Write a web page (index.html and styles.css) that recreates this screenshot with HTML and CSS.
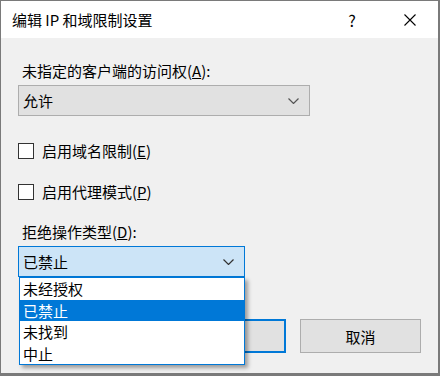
FILE: index.html
```html
<!DOCTYPE html>
<html lang="zh-CN">
  <head>
    <meta charset="utf-8" />
    <link rel="stylesheet" href="styles.css">
  </head>
  <body>
    <div class="dialog">
      <div class="titlebar">
        <span class="title">编辑 IP 和域限制设置</span>
        <span class="tb-btn help">?</span>
        <span class="tb-btn close">
          <svg width="12" height="12" viewBox="0 0 12 12"><path d="M0.5 0.5 L11.5 11.5 M11.5 0.5 L0.5 11.5" stroke="#000" stroke-width="1.1" fill="none"/></svg>
        </span>
      </div>
      <div class="content">
        <div class="label">未指定的客户端的访问权(<u>A</u>):</div>
        <div class="select">
          <span>允许</span>
          <svg class="chevron" width="11" height="6" viewBox="0 0 11 6"><polyline points="0.5,0.5 5.5,5.5 10.5,0.5" stroke="#555" stroke-width="1.2" fill="none"/></svg>
        </div>

        <div class="check first"><span class="box"></span>启用域名限制(<u>E</u>)</div>
        <div class="check"><span class="box"></span>启用代理模式(<u>P</u>)</div>

        <div class="label second">拒绝操作类型(<u>D</u>):</div>
        <div class="combo">
          <div class="select focused">
            <span>已禁止</span>
            <svg class="chevron" width="11" height="6" viewBox="0 0 11 6"><polyline points="0.5,0.5 5.5,5.5 10.5,0.5" stroke="#333" stroke-width="1.2" fill="none"/></svg>
          </div>
          <ul class="options">
            <li>未经授权</li>
            <li class="selected">已禁止</li>
            <li>未找到</li>
            <li>中止</li>
          </ul>
        </div>

        <div class="buttons">
          <button class="btn default">确定</button>
          <button class="btn">取消</button>
        </div>
      </div>
    </div>
  </body>
</html>
```

FILE: styles.css
```css
body {
    margin: 0;
    font-family: "Noto Sans CJK SC", "Noto Sans", sans-serif;
    font-size: 15px;
    color: #000;
}

.dialog {
    width: 440px; height: 376px;
    box-sizing: border-box;
    border: 1px solid #7a7a7a;
    border-right-width: 2px;
    border-bottom-width: 3px;
    background: #f0f0f0;
}

.titlebar {
    display: flex;
    align-items: center;
    height: 37px;
    background: #fff;
}

  .titlebar .title { flex: 1; padding-left: 11px; line-height: 20px; }
  .tb-btn {
      width: 57px; height: 37px;
      display: flex; align-items: center; justify-content: center;
  }
  .tb-btn.help { width: 58px; font-size: 16px; }

.content {
    padding: 23px 17px 0 17px;
}

.label {
    line-height: 20px;
    margin-left: 4px;
}
.label.second { margin-top: 20px; }

.select {
    display: flex;
    align-items: center;
    justify-content: space-between;
    box-sizing: border-box;
    width: 292px; height: 31px;
    margin-top: 4px;
    padding: 0 10px 0 4px;
    border: 1px solid #adadad;
    background: #e1e1e1;
    line-height: 20px;
}

  .select .chevron { margin-top: 1px; }

.check {
    display: flex;
    align-items: center;
    line-height: 20px;
    margin-top: 21px;
}
.check.first { margin-top: 25px; }

  .check .box {
      width: 16px; height: 16px;
      box-sizing: border-box;
      border: 1px solid #333;
      background: #fff;
      margin-right: 8px;
  }

.combo {
    position: relative;
    width: 227px;
}

  .combo .select.focused {
      width: 227px;
      border-color: #0078d7;
      background: #cce4f7;
  }

.options {
    position: absolute;
    top: 100%; left: 1px; right: 0;
    margin: 0; padding: 0;
    list-style: none;
    background: #fff;
    border: 1px solid #0078d7;
    box-shadow: 3px 3px 4px rgba(0,0,0,0.35);
    z-index: 2;
}

  .options li {
      height: 21.5px;
      line-height: 21.5px;
      padding-left: 3px;
  }
  .options li.selected { background: #0078d7; color: #fff; }

.buttons {
    display: flex;
    justify-content: flex-end;
    gap: 14px;
    margin-top: 42px;
}

.btn {
    width: 121px; height: 34px;
    box-sizing: border-box;
    font: inherit;
    border: 1px solid #adadad;
    background: #e1e1e1;
    padding: 0;
}
.btn.default { border: 2px solid #0078d7; }
```
